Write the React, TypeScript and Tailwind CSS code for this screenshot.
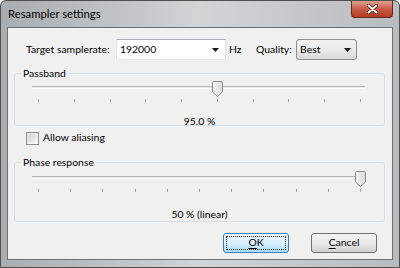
import React from "react";

const font = { fontFamily: 'Lato, "Open Sans", sans-serif' };

// Down-pointing Win7 trackbar thumb
function Thumb() {
  return (
    <svg width="11" height="16" viewBox="0 0 11 16">
      <defs>
        <linearGradient id="thumbFill" x1="0" y1="0" x2="1" y2="0">
          <stop offset="0" stopColor="#f4f4f4" />
          <stop offset="1" stopColor="#d9d9d9" />
        </linearGradient>
      </defs>
      <path
        d="M1.5 0.5 H9.5 Q10.5 0.5 10.5 1.5 V11 L5.5 15.5 L0.5 11 V1.5 Q0.5 0.5 1.5 0.5 Z"
        fill="url(#thumbFill)"
        stroke="#8c8c8c"
      />
    </svg>
  );
}

function Slider({ ticks, thumbLeft }: { ticks: number; thumbLeft: string }) {
  return (
    <div className="relative ml-[17px] w-[333px] h-[22px]">
      <div className="absolute left-0 right-0 top-[5px] h-[3px] border-t border-[#b4b4b4] bg-[#e7eaea] border-b border-b-[#fdfdfd]" />
      <div className={`absolute top-0 ${thumbLeft}`}>
        <Thumb />
      </div>
      <div className="absolute left-[6px] right-[4px] top-[18px] flex justify-between">
        {Array.from({ length: ticks }).map((_, i) => (
          <div key={i} className="w-px h-[3px] bg-[#a5a5a5]" />
        ))}
      </div>
    </div>
  );
}

function ArrowDown() {
  return (
    <svg width="7" height="4" viewBox="0 0 7 4">
      <path d="M0 0 H7 L3.5 4 Z" fill="#1a1a1a" />
    </svg>
  );
}

export default function App() {
  return (
    <div
      className="w-[400px] h-[268px] flex flex-col bg-gradient-to-r from-[#a9adb0] via-[#d2d4d6] to-[#b9bcbf] border border-[#4f4f4f] rounded-t-[6px] text-[10.4px] text-black overflow-hidden"
      style={font}
    >
      {/* Title bar */}
      <div className="h-[26px] flex items-start justify-between pl-[7px] pr-[6px]">
        <span className="mt-[5px] text-[11.3px] leading-[16px]">Resampler settings</span>
        <div className="w-[42px] h-[17px] rounded-b-[4px] border border-t-0 border-[#6b2a20] bg-gradient-to-b from-[#e2a090] via-[#c85a45] to-[#b33a22] flex items-center justify-center">
          <svg width="11" height="10" viewBox="0 0 11 10">
            <path d="M1.5 1.5 L9.5 8.5 M9.5 1.5 L1.5 8.5" stroke="#3a1510" strokeWidth="3.4" strokeLinecap="round" />
            <path d="M1.5 1.5 L9.5 8.5 M9.5 1.5 L1.5 8.5" stroke="#ffffff" strokeWidth="2" strokeLinecap="round" />
          </svg>
        </div>
      </div>

      {/* Client area */}
      <div className="mx-[6px] mb-[7px] flex-1 border border-[#6d6f72] bg-[#f0f0f0] flex flex-col">
        {/* Samplerate / quality row */}
        <div className="mt-[11px] h-[21px] flex items-center whitespace-nowrap">
          <span className="ml-[18px] w-[90px] shrink-0">Target samplerate:</span>
          <div className="w-[110px] shrink-0 h-[21px] bg-white border border-[#abadb3] border-l-[#e2e3ea] border-r-[#dbdfe6] border-b-[#e3e9ef] flex items-center justify-between pl-[3px] pr-[6px]">
            <span>192000</span>
            <ArrowDown />
          </div>
          <span className="ml-[3px] w-[15px] shrink-0">Hz</span>
          <span className="ml-[12px] w-[40px] shrink-0">Quality:</span>
          <div className="w-[61px] shrink-0 h-[21px] rounded-[3px] border border-[#8e8f8f] bg-gradient-to-b from-[#f2f2f2] via-[#ebebeb] to-[#d8d8d8] flex items-center justify-between pl-[3px] pr-[5px]">
            <span>Best</span>
            <ArrowDown />
          </div>
        </div>

        {/* Passband */}
        <fieldset className="mt-[5px] ml-[6px] mr-[7px] h-[61px] border border-[#d5dfe5] rounded-[3px] px-0">
          <legend className="ml-[6px] px-[2px] leading-[16px]">Passband</legend>
          <Slider ticks={10} thumbLeft="left-[180px]" />
          <div className="mt-[11px] text-center leading-[14px]">95.0 %</div>
        </fieldset>

        {/* Allow aliasing */}
        <label className="mt-[5px] ml-[18px] h-[14px] flex items-center gap-[4px]">
          <span className="w-[13px] h-[13px] border border-[#8e8f8f] bg-gradient-to-br from-[#dcdcdc] to-[#fbfbfb] p-[2px]">
            <span className="block w-full h-full bg-gradient-to-br from-[#cbcfd5] to-[#f6f6f6]" />
          </span>
          <span>Allow aliasing</span>
        </label>

        {/* Phase response */}
        <fieldset className="mt-[9px] ml-[6px] mr-[7px] h-[68px] border border-[#d5dfe5] rounded-[3px] px-0">
          <legend className="ml-[6px] px-[2px] leading-[16px]">Phase response</legend>
          <div className="mt-[1px]">
            <Slider ticks={11} thumbLeft="left-[323px]" />
          </div>
          <div className="mt-[14px] text-center leading-[14px]">50 % (linear)</div>
        </fieldset>

        {/* Buttons */}
        <div className="mt-[11px] flex justify-end gap-[22px] mr-[15px]">
          <button className="w-[66px] h-[20px] rounded-[3px] border border-[#3c7fb1] bg-gradient-to-b from-[#eaf6fd] via-[#d9f0fc] to-[#a7d9f5] p-[2px]">
            <span className="flex w-full h-full items-center justify-center border border-dotted border-[#333]">
              <span className="underline decoration-1 underline-offset-2">O</span>K
            </span>
          </button>
          <button className="w-[66px] h-[20px] rounded-[3px] border border-[#707070] bg-gradient-to-b from-[#f2f2f2] via-[#ebebeb] to-[#cfcfcf] flex items-center justify-center">
            <span className="underline decoration-1 underline-offset-2">C</span>ancel
          </button>
        </div>
      </div>
    </div>
  );
}
